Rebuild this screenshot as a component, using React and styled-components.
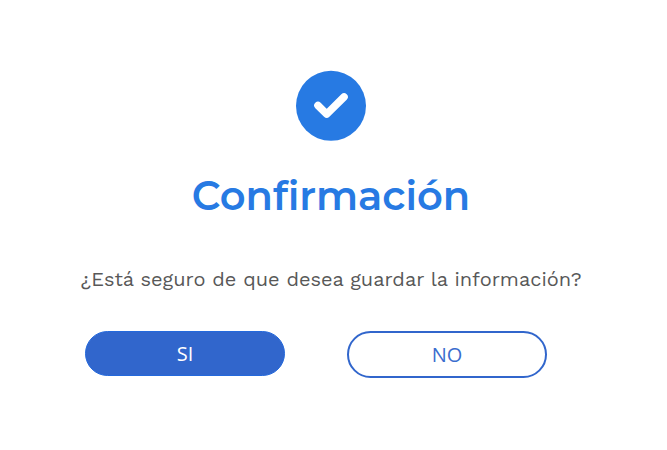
import React from "react";
import styled, { createGlobalStyle } from "styled-components";

const GlobalStyle = createGlobalStyle`
  * { box-sizing: border-box; }
  body { margin: 0; background: #fff; }
`;

const Dialog = styled.main`
  display: flex;
  flex-direction: column;
  align-items: center;
  width: 662px;
  height: 450px;
  padding-top: 70px;
`;

const StatusIcon = styled.svg`
  display: block;
  width: 72px;
  height: 72px;
`;

const Title = styled.h1`
  margin: 29px 0 0;
  font: 600 40px/49px Montserrat, Inter, sans-serif;
  color: #277ae3;
  white-space: nowrap;
`;

const Message = styled.p`
  margin: 44px 0 0;
  font: 400 20px/30px "Work Sans", "Open Sans", sans-serif;
  color: #585858;
  white-space: nowrap;
`;

const Actions = styled.div`
  display: flex;
  align-self: flex-start;
  align-items: flex-start;
  gap: 62px;
  margin: 37px 0 0 85px;
`;

const Button = styled.button`
  width: 200px;
  height: ${({ $outlined }) => ($outlined ? 47 : 45)}px;
  padding: 0;
  border: ${({ $outlined }) => ($outlined ? "2px solid #3166cc" : "1px solid #2469dc")};
  border-radius: 24px;
  background: ${({ $outlined }) => ($outlined ? "#fff" : "#3166cc")};
  color: ${({ $outlined }) => ($outlined ? "#3b6dce" : "#fff")};
  font: 400 20px/27px "Open Sans", sans-serif;
`;

export default function App() {
  return (
    <>
      <GlobalStyle />
      <Dialog>
        <StatusIcon viewBox="0 0 72 72" aria-hidden="true">
          <circle cx="36" cy="35.8" r="35" fill="#277ae3" />
          <path d="M23 35.5 L31.7 44.1 L49 27" fill="none" stroke="#fff" strokeWidth="7.6" strokeLinecap="round" strokeLinejoin="round" />
        </StatusIcon>
        <Title>Confirmación</Title>
        <Message>¿Está seguro de que desea guardar la información?</Message>
        <Actions>
          <Button>SI</Button>
          <Button $outlined>NO</Button>
        </Actions>
      </Dialog>
    </>
  );
}
